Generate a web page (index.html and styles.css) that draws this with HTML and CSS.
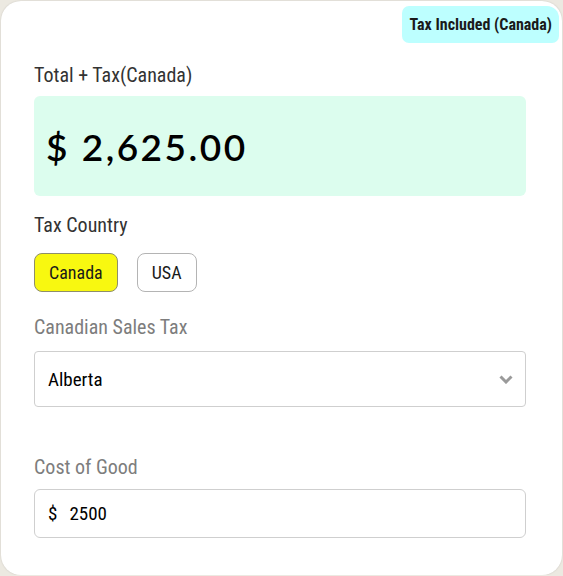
FILE: index.html
```html
<!DOCTYPE html>
<html lang="en">
    <head>
        <meta charset="UTF-8" />
        <meta name="viewport" content="width=device-width, initial-scale=1.0" />
        <title>Tax Calculator</title>
        <link rel="stylesheet" href="styles.css">
    </head>
    <body>
        <div class="card">
            <span class="badge">Tax Included (Canada)</span>

            <div class="label total-label">Total + Tax(Canada)</div>
            <div class="total">$ 2,625.00</div>

            <div class="label country-label">Tax Country</div>
            <div class="countries">
                <button class="country active">Canada</button>
                <button class="country">USA</button>
            </div>

            <label class="label muted" for="province">Canadian Sales Tax</label>
            <div class="select">
                <span class="select-value">Alberta</span>
                <svg class="chevron" width="14" height="9" viewBox="0 0 14 9">
                    <path d="M1.5 1.5 L7 7 L12.5 1.5" fill="none" stroke="#9a9a9a" stroke-width="3" />
                </svg>
            </div>

            <label class="label muted cost-label" for="cost">Cost of Good</label>
            <div class="money-input">
                <span class="currency">$</span>
                <span class="value">2500</span>
            </div>
        </div>
    </body>
</html>
```

FILE: styles.css
```css
body {
    margin: 0;
    background-color: #ece9e1;
    font-family: "Roboto Condensed", "Liberation Sans Narrow", Roboto, sans-serif;
    font-stretch: condensed;
}
.card {
    position: relative;
    box-sizing: border-box;
    width: 561px;
    height: 574px;
    margin: 1px 0 0 1px;
    padding: 62px 36px 0 33px;
    background-color: #fff;
    border-radius: 20px;
    box-shadow: 0 0 2px rgba(0, 0, 0, 0.15);
}
.badge {
    position: absolute;
    top: 5px;
    right: 3px;
    display: flex;
    align-items: center;
    height: 37px;
    padding: 0 7px 0 8px;
    box-sizing: border-box;
    background-color: #bdffff;
    border-radius: 7px 12px 7px 7px;
    font-size: 16px;
    font-weight: 700;
    color: #1a1a1a;
}
.label {
    display: block;
    font-size: 20px;
    line-height: 24px;
    color: #333;
}
.muted {
    color: #7d7d7d;
}
.total {
    box-sizing: border-box;
    height: 100px;
    margin-top: 9px;
    padding-left: 12px;
    display: flex;
    align-items: center;
    background-color: #dcfdee;
    border-radius: 6px;
    font-family: Lato, sans-serif;
    font-stretch: normal;
    font-size: 37px;
    font-weight: 600;
    line-height: 37px;
    letter-spacing: 2.5px;
    color: #000;
}
.country-label {
    margin-top: 17px;
}
.countries {
    display: flex;
    gap: 19px;
    margin-top: 16px;
}
.country {
    box-sizing: border-box;
    height: 39px;
    padding: 0 14px;
    border: 1px solid #b4b4b4;
    border-radius: 8px;
    background-color: #fff;
    font-family: inherit;
    font-stretch: condensed;
    font-size: 18px;
    color: #1a1a1a;
}
.country.active {
    background-color: #f8f810;
    border-color: #8e8e6a;
}
.countries + .label {
    margin-top: 23px;
}
.select {
    box-sizing: border-box;
    height: 56px;
    margin-top: 12px;
    padding: 0 12px 0 13px;
    display: flex;
    align-items: center;
    justify-content: space-between;
    border: 1px solid #cfcfcf;
    border-radius: 4px;
    font-size: 19px;
    color: #000;
}
.cost-label {
    margin-top: 48px;
}
.money-input {
    box-sizing: border-box;
    height: 49px;
    margin-top: 10px;
    padding: 0 13px;
    display: flex;
    align-items: center;
    gap: 12px;
    border: 1px solid #cfcfcf;
    border-radius: 6px;
    font-size: 19px;
    color: #000;
}
```
